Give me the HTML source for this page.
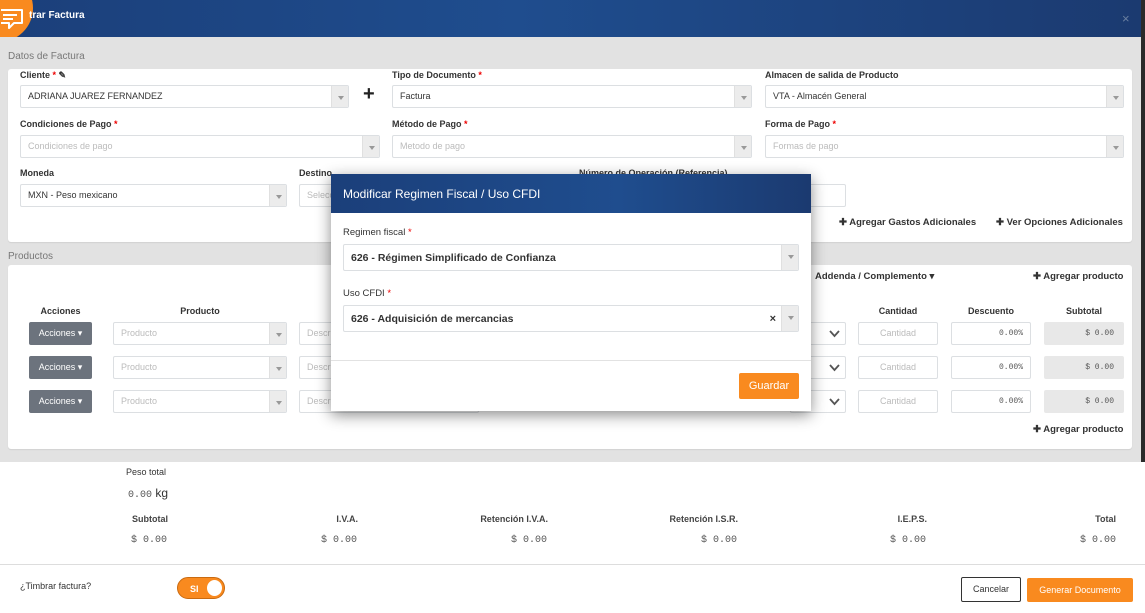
<!DOCTYPE html>
<html><head><meta charset="utf-8"><style>
*{box-sizing:border-box;margin:0;padding:0}
body{width:1145px;height:613px;overflow:hidden;font-family:"Liberation Sans",Arial,sans-serif;background:#fff;position:relative;color:#333}
.a{position:absolute}
.hdr{left:0;top:0;width:1145px;height:37px;background:linear-gradient(90deg,#1b3f7a 0%,#1f4d8e 45%,#1b3a70 100%)}
.bg{left:0;top:37px;width:1141px;height:425px;background:#e2e2e2}
.card{background:#fff;border-radius:3px;box-shadow:0 1px 1px rgba(0,0,0,.08)}
.lbl{font-size:9px;font-weight:bold;color:#333;white-space:nowrap}
.req{color:#e00}
.sel{background:#fff;border:1px solid #dcdfe2;border-radius:2px;height:23px;font-size:9px;color:#333;padding-left:7px;line-height:21px;white-space:nowrap;overflow:hidden}
.sel .ar{position:absolute;right:0;top:0;width:17px;height:21px;background:#ececec;border-left:1px solid #e0e0e0}
.sel .ar:after{content:"";position:absolute;left:6px;top:10px;border:3px solid transparent;border-top:4px solid #999}
.ph{color:#bbb}
.inp{background:#fff;border:1px solid #dcdfe2;border-radius:2px;height:23px;font-size:9px;color:#bbb;line-height:21px;padding:0 7px}
.btnA{background:#6c737d;color:#fff;font-size:9px;border-radius:2px;width:63px;height:23px;line-height:23px;text-align:center}
.th{font-size:9px;font-weight:bold;color:#333;text-align:center}
.mono{font-family:"Liberation Mono",monospace;font-size:9px;color:#555}
.link{font-size:9.5px;font-weight:bold;color:#333;white-space:nowrap}
.tl{font-size:9px;font-weight:bold;color:#444;text-align:right;width:150px}
.tv{font-family:"Liberation Mono",monospace;font-size:10px;color:#555;text-align:right;width:150px}
.chev{border:1px solid #dcdfe2;border-radius:2px;height:23px;background:#fff}
.chev svg{position:absolute;right:5px;top:7px}
</style></head><body>
<div class="a hdr"></div>
<div class="a" style="left:-35px;top:-26px;width:68px;height:68px;border-radius:50%;background:#f98a1f"></div>
<svg class="a" style="left:0;top:8px" width="26" height="24" viewBox="0 0 26 24"><path d="M1 2 H22 V15 H14 L9 20 V15 H1" fill="none" stroke="#fff" stroke-width="2" stroke-linejoin="round"/><path d="M3 7 H17 M3 11 H13" stroke="#fff" stroke-width="2"/></svg>
<div class="a" style="left:29px;top:10px;color:#fff;font-size:10px;font-weight:bold">trar Factura</div>
<div class="a" style="left:1122px;top:11px;color:#6a7fa0;font-size:13px">×</div>
<div class="a bg"></div>
<div class="a" style="left:1141px;top:0;width:4px;height:462px;background:#2a2a2a"></div>
<div class="a" style="left:8px;top:51px;font-size:10px;color:#777">Datos de Factura</div>
<div class="a card" style="left:8px;top:69px;width:1124px;height:173px"></div>

<div class="a lbl" style="left:20px;top:70px">Cliente <span class="req">*</span> ✎</div>
<div class="a sel" style="left:20px;top:85px;width:329px">ADRIANA JUAREZ FERNANDEZ<span class="ar"></span></div>
<div class="a" style="left:363px;top:83px;font-size:20px;font-weight:bold;color:#222">+</div>
<div class="a lbl" style="left:392px;top:70px">Tipo de Documento <span class="req">*</span></div>
<div class="a sel" style="left:392px;top:85px;width:360px">Factura<span class="ar"></span></div>
<div class="a lbl" style="left:765px;top:70px">Almacen de salida de Producto</div>
<div class="a sel" style="left:765px;top:85px;width:359px">VTA - Almacén General<span class="ar"></span></div>

<div class="a lbl" style="left:20px;top:119px">Condiciones de Pago <span class="req">*</span></div>
<div class="a sel ph" style="left:20px;top:135px;width:360px">Condiciones de pago<span class="ar"></span></div>
<div class="a lbl" style="left:392px;top:119px">Método de Pago <span class="req">*</span></div>
<div class="a sel ph" style="left:392px;top:135px;width:360px">Metodo de pago<span class="ar"></span></div>
<div class="a lbl" style="left:765px;top:119px">Forma de Pago <span class="req">*</span></div>
<div class="a sel ph" style="left:765px;top:135px;width:359px">Formas de pago<span class="ar"></span></div>

<div class="a lbl" style="left:20px;top:168px">Moneda</div>
<div class="a sel" style="left:20px;top:184px;width:267px">MXN - Peso mexicano<span class="ar"></span></div>
<div class="a lbl" style="left:299px;top:168px">Destino</div>
<div class="a sel ph" style="left:299px;top:184px;width:262px">Selecc<span class="ar"></span></div>
<div class="a lbl" style="left:579px;top:168px">Número de Operación (Referencia)</div>
<div class="a inp" style="left:579px;top:184px;width:267px"></div>
<div class="a link" style="left:839px;top:217px">✚ Agregar Gastos Adicionales</div>
<div class="a link" style="left:996px;top:217px">✚ Ver Opciones Adicionales</div>

<div class="a" style="left:8px;top:251px;font-size:10px;color:#777">Productos</div>
<div class="a card" style="left:8px;top:265px;width:1124px;height:184px"></div>
<div class="a link" style="left:815px;top:271px">Addenda / Complemento ▾</div>
<div class="a link" style="left:1033px;top:271px">✚ Agregar producto</div>
<div class="a th" style="left:29px;top:306px;width:63px">Acciones</div>
<div class="a th" style="left:113px;top:306px;width:174px">Producto</div>
<div class="a th" style="left:858px;top:306px;width:80px">Cantidad</div>
<div class="a th" style="left:951px;top:306px;width:80px">Descuento</div>
<div class="a th" style="left:1044px;top:306px;width:80px">Subtotal</div>

<div id="rows"></div>
<script>
var h='';[322,356,390].forEach(function(y){
h+='<div class="a btnA" style="left:29px;top:'+y+'px">Acciones ▾</div>';
h+='<div class="a sel ph" style="left:113px;top:'+y+'px;width:174px">Producto<span class="ar"></span></div>';
h+='<div class="a inp" style="left:299px;top:'+y+'px;width:180px">Descripción</div>';
h+='<div class="a chev" style="left:790px;top:'+y+'px;width:56px"><svg width="11" height="8"><path d="M1 1 L5.5 6 L10 1" fill="none" stroke="#555" stroke-width="1.8"/></svg></div>';
h+='<div class="a inp" style="left:858px;top:'+y+'px;width:80px;text-align:center">Cantidad</div>';
h+='<div class="a inp mono" style="left:951px;top:'+y+'px;width:80px;text-align:right;font-size:8px">0.00%</div>';
h+='<div class="a mono" style="left:1044px;top:'+y+'px;width:80px;height:23px;line-height:23px;background:#e8e8e8;border-radius:2px;text-align:right;padding-right:10px;font-size:8px">$ 0.00</div>';
});document.getElementById('rows').innerHTML=h;
</script>
<div class="a link" style="left:1033px;top:424px">✚ Agregar producto</div>

<div class="a lbl" style="left:126px;top:467px;font-weight:normal;color:#333;font-size:9px">Peso total</div>
<div class="a" style="left:128px;top:486px;font-size:12px"><span class="mono" style="font-size:10px">0.00</span> kg</div>
<div class="a tl" style="left:18px;top:514px">Subtotal</div>
<div class="a tl" style="left:208px;top:514px">I.V.A.</div>
<div class="a tl" style="left:398px;top:514px">Retención I.V.A.</div>
<div class="a tl" style="left:588px;top:514px">Retención I.S.R.</div>
<div class="a tl" style="left:777px;top:514px">I.E.P.S.</div>
<div class="a tl" style="left:966px;top:514px">Total</div>
<div class="a tv" style="left:17px;top:535px">$ 0.00</div>
<div class="a tv" style="left:207px;top:535px">$ 0.00</div>
<div class="a tv" style="left:397px;top:535px">$ 0.00</div>
<div class="a tv" style="left:587px;top:535px">$ 0.00</div>
<div class="a tv" style="left:776px;top:535px">$ 0.00</div>
<div class="a tv" style="left:966px;top:535px">$ 0.00</div>
<div class="a" style="left:0;top:564px;width:1145px;height:1px;background:#ddd"></div>
<div class="a" style="left:20px;top:581px;font-size:9px;color:#333">¿Timbrar factura?</div>
<div class="a" style="left:177px;top:577px;width:48px;height:22px;border-radius:11px;background:#f98a1f;border:1px solid #c96a10"></div>
<div class="a" style="left:190px;top:584px;font-size:9px;font-weight:bold;color:#fff">SI</div>
<div class="a" style="left:207px;top:580px;width:15px;height:16px;border-radius:50%;background:#fff"></div>
<div class="a" style="left:961px;top:577px;width:60px;height:25px;border:1px solid #333;border-radius:2px;font-size:9px;text-align:center;line-height:23px;color:#333">Cancelar</div>
<div class="a" style="left:1027px;top:578px;width:106px;height:24px;background:#f98a1f;border-radius:2px;font-size:9px;text-align:center;line-height:24px;color:#fff">Generar Documento</div>

<div class="a" style="left:331px;top:174px;width:480px;height:237px;background:#fff;box-shadow:0 4px 14px rgba(0,0,0,.45)"></div>
<div class="a" style="left:331px;top:174px;width:480px;height:39px;background:linear-gradient(90deg,#1b3f7a,#1f4d8e 60%,#1b3a70)"></div>
<div class="a" style="left:343px;top:187px;font-size:12px;color:#fff">Modificar Regimen Fiscal / Uso CFDI</div>
<div class="a" style="left:343px;top:227px;font-size:9.5px;color:#333">Regimen fiscal <span class="req">*</span></div>
<div class="a sel" style="left:343px;top:244px;width:456px;height:27px;line-height:26px;font-size:10.5px;font-weight:bold">626 - Régimen Simplificado de Confianza<span class="ar" style="height:25px"></span></div>
<div class="a" style="left:343px;top:288px;font-size:9.5px;color:#333">Uso CFDI <span class="req">*</span></div>
<div class="a sel" style="left:343px;top:305px;width:456px;height:27px;line-height:26px;font-size:10.5px;font-weight:bold">626 - Adquisición de mercancias<span style="position:absolute;right:22px;top:0;font-size:11px">×</span><span class="ar" style="height:25px"></span></div>
<div class="a" style="left:331px;top:360px;width:480px;height:1px;background:#e2e2e2"></div>
<div class="a" style="left:739px;top:373px;width:60px;height:26px;background:#f98a1f;border-radius:2px;color:#fff;font-size:11px;text-align:center;line-height:26px">Guardar</div>
</body></html>
